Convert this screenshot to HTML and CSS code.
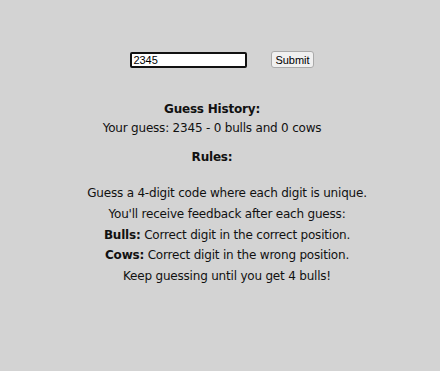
FILE: index.html
```html
<!DOCTYPE html>
<html lang="en">
<head>
    <meta charset="UTF-8">
    <title>Bulls and Cows</title>
    <link rel="stylesheet" href="styles.css">
</head>
<body>
    <div class="container">
        <div class="guess-form">
            <input type="text" id="guess" class="guess-input" value="2345">
            <button type="button" class="button">Submit</button>
        </div>

        <div class="history">
            <h3>Guess History:</h3>
            <p>Your guess: 2345 - 0 bulls and 0 cows</p>
        </div>

        <div class="rules">
            <h3>Rules:</h3>
            <p>Guess a 4-digit code where each digit is unique.</p>
            <p>You'll receive feedback after each guess:</p>
            <p><b>Bulls:</b> Correct digit in the correct position.</p>
            <p><b>Cows:</b> Correct digit in the wrong position.</p>
            <p>Keep guessing until you get 4 bulls!</p>
        </div>
    </div>
</body>
</html>
```

FILE: styles.css
```css
body {
    font-family: "DejaVu Sans", sans-serif;
    font-size: 12px;
    letter-spacing: -0.2px;
    margin: 0;
    background-color: #d3d3d3;
    color: #111;
}
.container {
    text-align: center;
    padding-top: 51px;
}
.guess-form {
    display: flex;
    justify-content: center;
    align-items: center;
    gap: 24px;
    margin-left: 4px;
}
.guess-input {
    box-sizing: border-box;
    width: 117px;
    height: 16px;
    padding: 0 1px;
    border: 2px solid #111;
    border-radius: 2px;
    font-family: "Liberation Sans", Arial, sans-serif;
    font-size: 11px;
    letter-spacing: 0;
}
.button {
    box-sizing: border-box;
    height: 17px;
    font-family: "Liberation Sans", Arial, sans-serif;
    font-size: 11px;
    letter-spacing: 0;
    padding: 0 3px;
    background-color: #f0f0f0;
    border: 1px solid #aaa;
    border-radius: 3px;
}
.history {
    margin-top: 31px;
    padding-right: 16px;
}
.history h3, .rules h3 {
    font-size: 12px;
    margin: 0;
    line-height: 20px;
}
.history p {
    margin: 0;
    line-height: 19px;
}
.rules {
    margin-top: 9px;
}
.rules h3 {
    margin-bottom: 16px;
    padding-right: 16px;
}
.rules p {
    margin: 0;
    padding-left: 14px;
    line-height: 20.8px;
}
```
